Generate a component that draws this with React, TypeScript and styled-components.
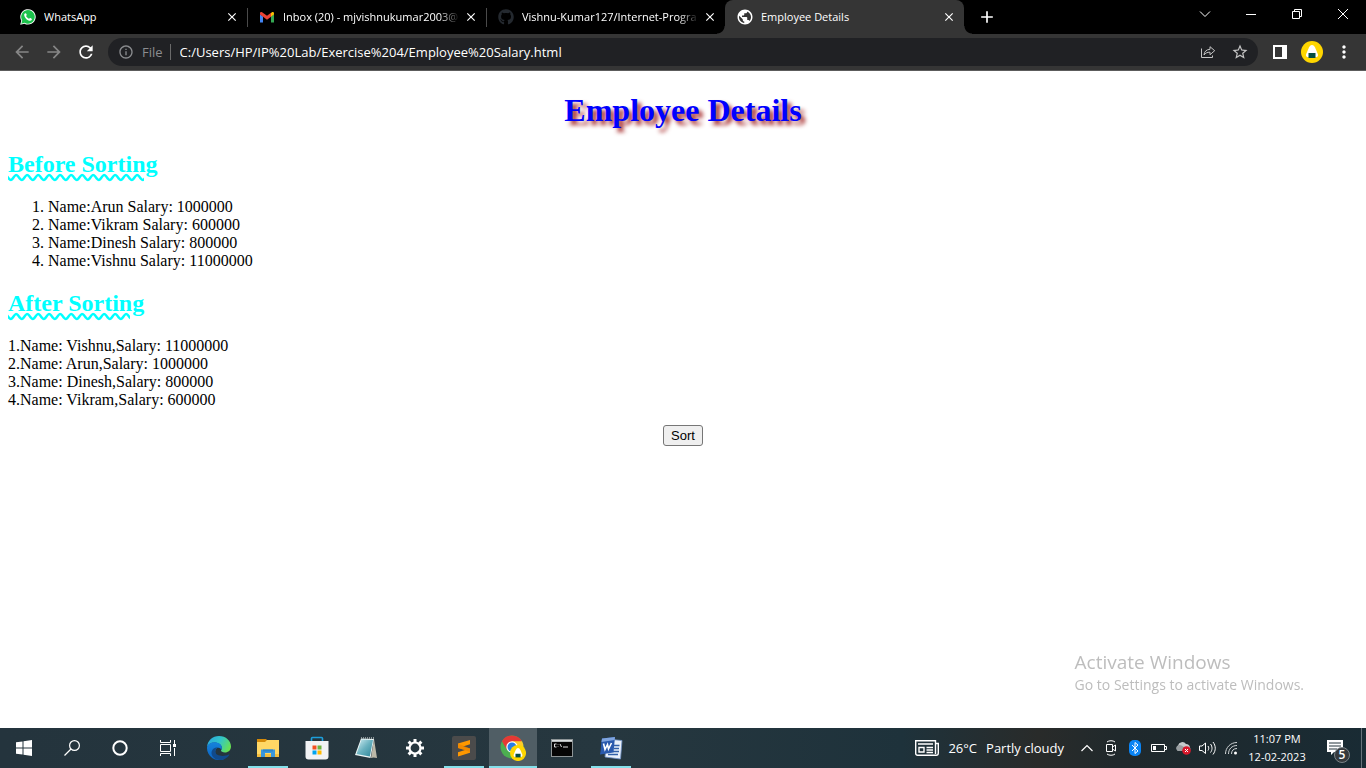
import React from "react";
import styled, { createGlobalStyle, css } from "styled-components";
import {
  MdAdd,
  MdArrowBack,
  MdArrowForward,
  MdClose,
  MdInfoOutline,
  MdMoreVert,
  MdPublic,
  MdRefresh,
  MdStarBorder,
} from "react-icons/md";
import { FaGithub } from "react-icons/fa";

const UI_FONT = '"Open Sans", "Noto Sans", sans-serif';
const PAGE_FONT = '"Liberation Serif", "Times New Roman", serif';

const GlobalStyle = createGlobalStyle`
  * { box-sizing: border-box; }
  body { margin: 0; background: #fff; }
  svg { display: block; flex: none; }
`;

const Screen = styled.div`
  display: flex;
  flex-direction: column;
  min-height: 100vh;
  font-family: ${UI_FONT};
`;

const PlainButton = styled.button`
  display: flex;
  align-items: center;
  justify-content: center;
  flex: none;
  margin: 0;
  padding: 0;
  border: 0;
  background: none;
  color: inherit;
  font-family: inherit;
`;

/* ---------- browser tabs ---------- */

const TabStrip = styled.header`
  display: flex;
  height: 34px;
  padding-left: 8px;
  background: #000;
  color: #fff;
`;

const Tab = styled.div<{ $active?: boolean; $divided?: boolean }>`
  position: relative;
  display: flex;
  align-items: center;
  flex: 0 1 239px;
  min-width: 0;
  padding: 0 7px 0 12px;
  ${(p) =>
    p.$divided &&
    css`
      &::after {
        content: "";
        position: absolute;
        right: -1px;
        top: 8px;
        width: 1px;
        height: 19px;
        background: #4a4a4a;
      }
    `}
  ${(p) =>
    p.$active &&
    css`
      background: #353535;
      border-radius: 8px 8px 0 0;
      &::before,
      &::after {
        content: "";
        position: absolute;
        bottom: 0;
        width: 8px;
        height: 8px;
      }
      &::before {
        left: -8px;
        background: radial-gradient(circle at 0 0, #000 7px, #353535 8px);
      }
      &::after {
        right: -8px;
        background: radial-gradient(circle at 100% 0, #000 7px, #353535 8px);
      }
    `}
`;

const TabIcon = styled.span`
  display: flex;
  justify-content: center;
  flex: none;
  width: 16px;
  margin-right: 8px;
`;

const TabTitle = styled.span<{ $fade?: boolean }>`
  flex: 1;
  min-width: 0;
  margin-right: 3px;
  overflow: hidden;
  white-space: nowrap;
  font-size: 11px;
  line-height: 18px;
  ${(p) => p.$fade && "mask-image: linear-gradient(90deg, #000 88%, transparent);"}
`;

const TabClose = styled(PlainButton)`
  width: 16px;
  height: 16px;
`;

const NewTab = styled(PlainButton)`
  width: 28px;
  margin-left: 9px;
`;

const WindowControls = styled.div`
  display: flex;
  height: 28px;
  margin-left: auto;
`;

const WindowButton = styled(PlainButton)`
  width: 46px;
`;

/* ---------- toolbar ---------- */

const Toolbar = styled.nav`
  display: flex;
  align-items: center;
  height: 37px;
  padding: 0 6px;
  border-bottom: 1px solid #5c5c5c;
  background: #353535;
  color: #fff;
`;

const ToolButton = styled(PlainButton)<{ $tone?: "dim" | "soft" }>`
  width: 32px;
  height: 28px;
  color: ${(p) => (p.$tone === "dim" ? "#868686" : p.$tone === "soft" ? "#c4c4c4" : "#fff")};
`;

const AddressBar = styled.div`
  display: flex;
  align-items: center;
  flex: 1;
  min-width: 0;
  height: 28px;
  margin: 0 6px;
  padding: 0 2px 0 10px;
  border-radius: 14px;
  background: #202124;
`;

const Scheme = styled.label`
  display: flex;
  align-items: center;
  gap: 8px;
  padding-right: 7px;
  border-right: 1px solid #6a6a6a;
  color: #8b8d90;
  font-size: 13px;
  line-height: 16px;
`;

const UrlInput = styled.input`
  flex: 1;
  min-width: 0;
  padding: 0 0 0 9px;
  border: 0;
  outline: 0;
  background: none;
  color: #fff;
  font-family: inherit;
  font-size: 13px;
  line-height: 20px;
`;

/* ---------- document ---------- */

const Document = styled.main`
  flex: 1;
  padding: 20px 8px;
  background: #fff;
  color: #000;
  font-family: ${PAGE_FONT};
  font-size: 16px;
  line-height: 18px;
`;

const Title = styled.h1`
  margin: 0 0 22px;
  color: blue;
  font-size: 32px;
  line-height: 38px;
  text-align: center;
  text-shadow: 4px 4px 4px brown;
`;

const SectionTitle = styled.h2`
  margin: 20px 0;
  color: cyan;
  font-size: 24px;
  line-height: 27px;
  text-decoration: underline wavy;
`;

const EmployeeList = styled.ol`
  margin: 0;
  padding: 0 0 0 40px;
`;

const SortedLines = styled.div`
  margin: 0;
`;

const SortButton = styled.button`
  display: block;
  margin: 16px auto 0;
  padding: 1px 7px;
  border: 1px solid #767676;
  border-radius: 3px;
  background: #efefef;
  color: #000;
  font-family: "Liberation Sans", Arial, sans-serif;
  font-size: 13px;
  line-height: 17px;
`;

const Watermark = styled.aside`
  position: fixed;
  right: 62px;
  bottom: 73px;
  color: #bdbdbd;
  font-size: 14px;
  line-height: 20px;
  white-space: nowrap;
  pointer-events: none;
`;

const WatermarkTitle = styled.div`
  font-size: 19px;
  line-height: 26px;
`;

/* ---------- taskbar ---------- */

const Taskbar = styled.footer`
  display: flex;
  height: 40px;
  background: linear-gradient(90deg, #24343d 0%, #26373f 45%, #1e323b 66%, #292b2a 76%, #20292c 82%, #192b34 100%);
  color: #fff;
`;

const SystemButtons = styled.div`
  display: flex;
  margin-right: 3px;
`;

const AppButtons = styled.div`
  display: flex;
  gap: 1px;
`;

const TaskButton = styled(PlainButton)<{ $state?: "open" | "focused" }>`
  width: 48px;
  height: 40px;
  ${(p) =>
    p.$state === "open" &&
    css`
      background: linear-gradient(#84e0ea, #84e0ea) center bottom / 40px 2px no-repeat;
    `}
  ${(p) =>
    p.$state === "focused" &&
    css`
      background: linear-gradient(#84e0ea, #84e0ea) center bottom / 48px 2px no-repeat #505e65;
    `}
`;

const Tray = styled.div`
  display: flex;
  align-items: center;
  margin-left: auto;
`;

const Weather = styled(PlainButton)`
  gap: 9px;
  margin-right: 11px;
  font-size: 13px;
  line-height: 20px;
`;

const TrayButton = styled(PlainButton)`
  width: 24px;
  height: 40px;
`;

const Clock = styled(PlainButton)`
  flex-direction: column;
  width: 68px;
  height: 40px;
  font-size: 11px;
  line-height: 18px;
  white-space: nowrap;
`;

const Notifications = styled(PlainButton)`
  width: 48px;
  height: 40px;
  margin-right: 2px;
`;

const ShowDesktop = styled(PlainButton)`
  width: 5px;
  height: 40px;
  border-left: 1px solid #66727a;
`;

/* ---------- drawings ---------- */

const WhatsAppIcon = () => (
  <svg width="16" height="16" viewBox="0 0 16 16">
    <path d="M.2 15.8l1.1-4.1A7.7 7.7 0 1 1 4.4 14.7z" fill="#fff" />
    <path d="M1.3 14.7l.9-3.2A6.8 6.8 0 1 1 4.6 13.8z" fill="#1cc24c" />
    <path d="M5.5 4.2c-.5-.2-1.4.7-1.3 1.7.2 2.7 3.4 5.9 6 5.8 1 0 1.7-.8 1.7-1.7 0-.4-1.6-1.2-2-1.1-.3.1-.7.9-1 .9-.9-.2-2.7-1.9-2.8-2.7 0-.3.6-.7.7-1 .1-.4-.6-1.8-1.300-1.900z" fill="#fff" />
  </svg>
);

const GmailIcon = () => (
  <svg width="16" height="16" viewBox="0 0 16 16">
    <path d="M1 4v9.500h3V7.600L1.300 5.500z" fill="#4285f4" />
    <path d="M15 4v9.500h-3V7.600l2.700-2.100z" fill="#34a853" />
    <path d="M12 7.700V4l.9-.8c.9-.6 2.100 0 2.100 1.100v1.200z" fill="#fbbc04" />
    <path d="M4 7.800L1 5.500V4.300c0-1.100 1.200-1.700 2.100-1.100L8 6.700l4-3V7.800l-4 3z" fill="#ea4335" />
  </svg>
);

const ShareIcon = () => (
  <svg width="16" height="16" viewBox="0 0 16 16" fill="none" stroke="currentColor">
    <path d="M1.500 4.500v9h11V11.500" />
    <path d="M4 11c.3-3.400 2.300-5.500 6-5.700V2.700l4.700 4-4.700 4V8.200C7.300 8.200 5.400 9 4 11z" strokeLinejoin="round" />
  </svg>
);

/* Rice-ball picture shared by the profile button and the running browser's badge. */
const RiceBall = () => (
  <g>
    <circle cx="11" cy="11" r="11" fill="#ffd600" />
    <path d="M11 4c1.700 0 2.600 1.600 3.700 4l2.100 5c.7 1.900-.2 3.300-2.100 3.300H7.300c-1.900 0-2.800-1.400-2.100-3.300l2.100-5C8.400 5.600 9.300 4 11 4z" fill="#fff" />
    <path d="M7.500 12h7v5h-7z" fill="#054d40" />
  </g>
);

const EdgeIcon = () => (
  <svg width="24" height="24" viewBox="0 0 24 24">
    <defs>
      <linearGradient id="edgeTop" x1="0" y1="0.2" x2="1" y2="0.6">
        <stop offset="0" stopColor="#2aa8df" />
        <stop offset=".5" stopColor="#32c5c9" />
        <stop offset="1" stopColor="#67e052" />
      </linearGradient>
      <linearGradient id="edgeLow" x1="0" y1="0" x2="0" y2="1">
        <stop offset="0" stopColor="#1683dc" />
        <stop offset="1" stopColor="#0b62c0" />
      </linearGradient>
    </defs>
    <path d="M0 11C.6 4.500 5.500 0 12 0c7 0 12 5 12 10.400 0 3.700-2.800 6-6 6-2.500 0-4-.9-4-1.800 0-.7.900-1 .9-2.700C14.900 8.600 11 6.500 7.500 6.500 4 6.500 1 8.300 0 11z" fill="url(#edgeTop)" />
    <path d="M0 12c0-3.200 3.300-5.700 7.500-5.700 4 0 7.400 2.200 7.400 5.500 0 1.200-.4 1.900-.7 2.300-.3-1.600-1.300-2.300-2.700-2.300-2 0-3.300 1.800-3.300 4 0 4.500 4.300 7.800 9 7.100A12 12 0 0 1 0 12z" fill="url(#edgeLow)" />
    <path d="M8.200 15.800c0-2.200 1.300-4 3.300-4-2.700-1.300-7 1-7 5.200 0 3.600 3.500 7 8.500 7 4 0 7.500-2.200 9.300-5 .3-.5-.1-.8-.6-.5-5 2.700-13.500 1.500-13.500-2.700z" fill="#114a8b" />
  </svg>
);

const ExplorerIcon = () => (
  <svg width="24" height="24" viewBox="0 0 24 24">
    <path d="M1 3h9l2 2v3H1z" fill="#d58a09" />
    <path d="M1 6h8l2-2h12v17H1z" fill="#ffd765" />
    <path d="M1 18h22v3H1z" fill="#f5bd3c" />
    <path d="M5 13.500h14V21h-4v-4H9v4H5z" fill="#3b97dc" />
    <path d="M7 13.500h10v2H7z" fill="#2a84cc" />
  </svg>
);

const StoreIcon = () => (
  <svg width="24" height="24" viewBox="0 0 24 24">
    <path d="M6.500 6V2.500c0-.6.400-1 1-1h9c.6 0 1 .4 1 1V6" fill="none" stroke="#1d9fdc" strokeWidth="1.600" />
    <path d="M.5 5h23v15.500a3 3 0 0 1-3 3h-17a3 3 0 0 1-3-3z" fill="#f1f2f4" />
    <path d="M7.500 9.500h4v4h-4z" fill="#f25022" />
    <path d="M12.500 9.500h4v4h-4z" fill="#6cb33f" />
    <path d="M7.500 14.500h4v4h-4z" fill="#00a4ef" />
    <path d="M12.500 14.500h4v4h-4z" fill="#ffb900" />
  </svg>
);

const NotepadIcon = () => (
  <svg width="24" height="24" viewBox="0 0 24 24">
    <defs>
      <linearGradient id="notePage" x1="0" y1="0" x2="1" y2="1">
        <stop offset="0" stopColor="#d2eef3" />
        <stop offset=".5" stopColor="#69b1bf" />
        <stop offset="1" stopColor="#2c8598" />
      </linearGradient>
    </defs>
    <path d="M20 3l3 19-3.500-.5L17 22z" fill="#bcb8a8" />
    <path d="M7 2.500L20 3l-3.500 19L1 19z" fill="#edf6f6" />
    <path d="M7.500 3.500l11.500.4-3.200 16.600L2.500 18z" fill="url(#notePage)" />
    <path d="M7 2h13.500" stroke="#adb5b7" strokeWidth="1.500" strokeDasharray="1 1" />
  </svg>
);

const SublimeIcon = () => (
  <svg width="24" height="24" viewBox="0 0 24 24">
    <rect width="24" height="24" rx="2" fill="#4b4b4b" />
    <path d="M6 7.500L18 4v4.300l-7 2.100 7 2.200v4.100L6 20.500v-4.200l7-2.200-7-2.200z" fill="#ff9800" />
    <path d="M6 7.500v4.400l12 4.200v-3.500z" fill="#e88100" opacity=".6" />
  </svg>
);

const ChromeIcon = () => (
  <svg width="26" height="26" viewBox="0 0 26 26">
    <circle cx="12" cy="12" r="11.500" fill="#4caf50" />
    <path d="M12 12L2 6.200A11.500 11.500 0 0 1 22 6.300z" fill="#e53935" />
    <path d="M12 6.300h10A11.500 11.500 0 0 1 12 23.500l5-8.600z" fill="#ffca28" />
    <path d="M2 6.200L7 15l5-3V6.300z" fill="#e53935" />
    <circle cx="12" cy="12" r="5.700" fill="#fff" />
    <circle cx="12" cy="12" r="4.500" fill="#287de8" />
    <g transform="translate(10 10) scale(.73)">
      <RiceBall />
    </g>
  </svg>
);

const TerminalIcon = () => (
  <svg width="24" height="24" viewBox="0 0 24 24">
    <path d="M1 3h22v18H1z" fill="#8d9496" />
    <path d="M2 4h20v1.500H2z" fill="#dadedf" />
    <path d="M2 6h20v14H2z" fill="#050505" />
    <path d="M6.500 8H4.500v3h2M8 8.500v.5M8 10.500v.5M10 8l1.500 3M13 11h5" fill="none" stroke="#ddd" strokeWidth="1" />
  </svg>
);

const WordIcon = () => (
  <svg width="24" height="24" viewBox="0 0 24 24">
    <path d="M8 3l15 1.500L21.500 23 6 21z" fill="#e9f0fa" stroke="#6e91c6" strokeWidth=".8" />
    <path d="M15 9.500h5.500M15 12.500h5M14 15.500h6M9 18.500h10" stroke="#3260a8" strokeWidth="1.300" />
    <path d="M3 2.500L16 1l-1.500 15.500L1 18.500C2.500 13 1.500 7 3 2.500z" fill="#2959ad" />
    <path d="M3 2.500L16 1l-.3 3L2.500 6z" fill="#7fa4df" />
    <path d="M4.500 7.500l1.500 6 2.500-5 1 4.500 3-6" fill="none" stroke="#fff" strokeWidth="1.600" />
  </svg>
);

const NotificationIcon = () => (
  <svg width="30" height="30" viewBox="0 0 30 30">
    <path d="M7 7h16v12h-9l-3 3v-3H7z" fill="#fff" />
    <path d="M9 10h12M9 13h12M9 16h8" stroke="#25343d" />
    <circle cx="22" cy="22" r="7.500" fill="#35393c" stroke="#7a8388" />
    <text x="22" y="26" textAnchor="middle" fill="#fff" fontSize="12" fontWeight="600" fontFamily={UI_FONT}>5</text>
  </svg>
);

const tabs = [
  { title: "WhatsApp", icon: <WhatsAppIcon />, divided: true },
  { title: "Inbox (20) - mjvishnukumar2003@", icon: <GmailIcon />, divided: true, fade: true },
  { title: "Vishnu-Kumar127/Internet-Progra", icon: <FaGithub size={16} color="#24292f" />, fade: true },
  { title: "Employee Details", icon: <MdPublic size={18} />, active: true },
];

const employees = [
  { name: "Arun", salary: 1000000 },
  { name: "Vikram", salary: 600000 },
  { name: "Dinesh", salary: 800000 },
  { name: "Vishnu", salary: 11000000 },
];

const bySalary = [...employees].sort((a, b) => b.salary - a.salary);

function Browser() {
  return (
    <>
      <TabStrip>
        {tabs.map((t) => (
          <Tab key={t.title} $active={t.active} $divided={t.divided}>
            <TabIcon>{t.icon}</TabIcon>
            <TabTitle $fade={t.fade}>{t.title}</TabTitle>
            <TabClose aria-label="Close tab"><MdClose size={14} /></TabClose>
          </Tab>
        ))}
        <NewTab aria-label="New tab"><MdAdd size={20} /></NewTab>
        <WindowControls>
          <WindowButton aria-label="Search tabs">
            <svg width="12" height="12" fill="none" stroke="#fff"><path d="M1 3.500l5 5 5-5" /></svg>
          </WindowButton>
          <WindowButton aria-label="Minimize">
            <svg width="10" height="10" fill="none" stroke="#fff"><path d="M0 5.500h10" /></svg>
          </WindowButton>
          <WindowButton aria-label="Restore">
            <svg width="10" height="10" fill="none" stroke="#fff"><path d="M.5 2.500h7v7h-7zM2.500 2.500v-2h7v7h-2" /></svg>
          </WindowButton>
          <WindowButton aria-label="Close window">
            <svg width="10" height="10" fill="none" stroke="#fff"><path d="M0 0l10 10M10 0L0 10" /></svg>
          </WindowButton>
        </WindowControls>
      </TabStrip>
      <Toolbar>
        <ToolButton $tone="dim" aria-label="Back"><MdArrowBack size={20} /></ToolButton>
        <ToolButton $tone="dim" aria-label="Forward"><MdArrowForward size={20} /></ToolButton>
        <ToolButton aria-label="Reload"><MdRefresh size={20} /></ToolButton>
        <AddressBar>
          <Scheme htmlFor="url"><MdInfoOutline size={16} />File</Scheme>
          <UrlInput id="url" defaultValue="C:/Users/HP/IP%20Lab/Exercise%204/Employee%20Salary.html" />
          <ToolButton $tone="soft" aria-label="Share"><ShareIcon /></ToolButton>
          <ToolButton $tone="soft" aria-label="Bookmark"><MdStarBorder size={18} /></ToolButton>
        </AddressBar>
        <ToolButton aria-label="Side panel">
          <svg width="14" height="14"><path d="M0 0h14v14H0zM2 2v10h7V2z" fill="#fff" fillRule="evenodd" /></svg>
        </ToolButton>
        <ToolButton aria-label="Profile">
          <svg width="22" height="22" viewBox="0 0 22 22"><RiceBall /></svg>
        </ToolButton>
        <ToolButton aria-label="Menu"><MdMoreVert size={20} /></ToolButton>
      </Toolbar>
    </>
  );
}

function DesktopBar() {
  return (
    <Taskbar>
      <SystemButtons>
        <TaskButton aria-label="Start">
          <svg width="16" height="16" fill="#fff"><path d="M0 2.300l6.500-.9v6.100H0zM7.500 1.200L16 0v7.500H7.500zM0 8.500h6.500v6.100L0 13.700zM7.500 8.500H16V16l-8.500-1.200z" /></svg>
        </TaskButton>
        <TaskButton aria-label="Search">
          <svg width="16" height="16" fill="none" stroke="#fff" strokeWidth="1.200"><circle cx="10.500" cy="5.500" r="4.900" /><path d="M7 9L.5 15.500" /></svg>
        </TaskButton>
        <TaskButton aria-label="Cortana">
          <svg width="16" height="16" fill="none" stroke="#fff" strokeWidth="2"><circle cx="8" cy="8" r="6.700" /></svg>
        </TaskButton>
        <TaskButton aria-label="Task view">
          <svg width="16" height="16" fill="none" stroke="#fff">
            <path d="M.5 0v2.500h10V0M.5 16v-2.500h10V16M.5 4.500h10v7H.5zM14.500 0v4M14.500 8v8" />
            <path d="M13 4h3v3h-3z" fill="#fff" stroke="none" />
          </svg>
        </TaskButton>
      </SystemButtons>
      <AppButtons>
        <TaskButton aria-label="Edge"><EdgeIcon /></TaskButton>
        <TaskButton aria-label="File Explorer" $state="open"><ExplorerIcon /></TaskButton>
        <TaskButton aria-label="Store"><StoreIcon /></TaskButton>
        <TaskButton aria-label="Notepad"><NotepadIcon /></TaskButton>
        <TaskButton aria-label="Settings">
          <svg width="20" height="20" viewBox="0 0 20 20" fill="none" stroke="#fff">
            <circle cx="10" cy="10" r="5.500" strokeWidth="2.200" />
            <g strokeWidth="3">
              <path d="M10 1v3M10 16v3M1 10h3M16 10h3M3.600 3.600l2.200 2.200M14.200 14.200l2.200 2.200M3.600 16.400l2.200-2.200M14.200 5.800l2.200-2.200" />
            </g>
          </svg>
        </TaskButton>
        <TaskButton aria-label="Sublime Text" $state="open"><SublimeIcon /></TaskButton>
        <TaskButton aria-label="Chrome" $state="focused"><ChromeIcon /></TaskButton>
        <TaskButton aria-label="Command Prompt"><TerminalIcon /></TaskButton>
        <TaskButton aria-label="Word" $state="open"><WordIcon /></TaskButton>
      </AppButtons>
      <Tray>
        <Weather>
          <svg width="24" height="16" fill="none" stroke="#fff" strokeWidth="1.400">
            <path d="M20.500 3.500h2.800V13c0 1.300-.8 2.300-2 2.300H2.500c-1 0-1.800-.8-1.800-1.800V.7h19.800V14" />
            <path d="M3 4h15M11.500 7.500H18M11.500 10H18M11.500 12.500H18M4 7.500h5v4.500H4z" />
          </svg>
          <span>26°C</span>
          <span>Partly cloudy</span>
        </Weather>
        <TrayButton aria-label="Show hidden icons">
          <svg width="12" height="8" fill="none" stroke="#fff" strokeWidth="1.200"><path d="M.5 7L6 1.500 11.500 7" /></svg>
        </TrayButton>
        <TrayButton aria-label="Meet now">
          <svg width="12" height="16" fill="none" stroke="#fff"><path d="M1.500 4.500h6v7h-6zM7.500 7l3-2v6l-3-2M2 2c2-1.700 6-1.700 8 0M2 14c2 1.700 6 1.700 8 0" /></svg>
        </TrayButton>
        <TrayButton aria-label="Bluetooth">
          <svg width="12" height="16"><rect width="12" height="16" rx="5" fill="#0a84f4" /><path d="M3 5l6 6-3 2.500v-11L9 5l-6 6" fill="none" stroke="#fff" /></svg>
        </TrayButton>
        <TrayButton aria-label="Battery">
          <svg width="16" height="10" fill="none" stroke="#fff"><path d="M.5 1.500h13v7H.5zM14 3.500h1.500v3H14" /><path d="M2 3h3v4H2z" fill="#fff" stroke="none" /></svg>
        </TrayButton>
        <TrayButton aria-label="OneDrive">
          <svg width="16" height="14">
            <path d="M3.500 10A3 3 0 0 1 3 4.500 4.500 4.500 0 0 1 11 3a4 4 0 0 1 4 3.500c1 2-.5 3.500-2 3.500z" fill="#c6cacc" />
            <path d="M3 4.500c2-1 3.500 0 5.500 1.200L13 10H3.500A3 3 0 0 1 3 4.500z" fill="#999ea1" />
            <circle cx="11.500" cy="9.500" r="4.300" fill="#d8192c" />
            <path d="M10 8l3 3M13 8l-3 3" stroke="#fff" />
          </svg>
        </TrayButton>
        <TrayButton aria-label="Volume">
          <svg width="17" height="14" fill="none" stroke="#fff"><path d="M.5 5v4.500H3l3.500 3V2L3 5zM9 5c1 1.500 1 3 0 4.500M11.500 3c2 2.500 2 6 0 8.500M14 1c3 4 3 8.500 0 12.500" /></svg>
        </TrayButton>
        <TrayButton aria-label="Wi-Fi">
          <svg width="14" height="14" fill="none" stroke="#d0d4d6">
            <path d="M1.500 13C1.500 6.500 6.500 1.500 13 1.500M4.500 13c0-5 3.500-8.500 8.500-8.500M7.500 13C7.500 9.500 9.500 7.500 13 7.500" />
            <circle cx="11.500" cy="12" r="1.500" fill="#fff" stroke="none" />
          </svg>
        </TrayButton>
        <Clock>
          <span>11:07 PM</span>
          <span>12-02-2023</span>
        </Clock>
        <Notifications aria-label="Notifications"><NotificationIcon /></Notifications>
        <ShowDesktop aria-label="Show desktop" />
      </Tray>
    </Taskbar>
  );
}

export default function App() {
  return (
    <Screen>
      <GlobalStyle />
      <Browser />
      <Document>
        <Title>Employee Details</Title>
        <SectionTitle>Before Sorting</SectionTitle>
        <EmployeeList>
          {employees.map((e) => (
            <li key={e.name}>{`Name:${e.name} Salary: ${e.salary}`}</li>
          ))}
        </EmployeeList>
        <SectionTitle>After Sorting</SectionTitle>
        <SortedLines>
          {bySalary.map((e, i) => (
            <div key={e.name}>{`${i + 1}.Name: ${e.name},Salary: ${e.salary}`}</div>
          ))}
        </SortedLines>
        <SortButton>Sort</SortButton>
      </Document>
      <Watermark>
        <WatermarkTitle>Activate Windows</WatermarkTitle>
        Go to Settings to activate Windows.
      </Watermark>
      <DesktopBar />
    </Screen>
  );
}
